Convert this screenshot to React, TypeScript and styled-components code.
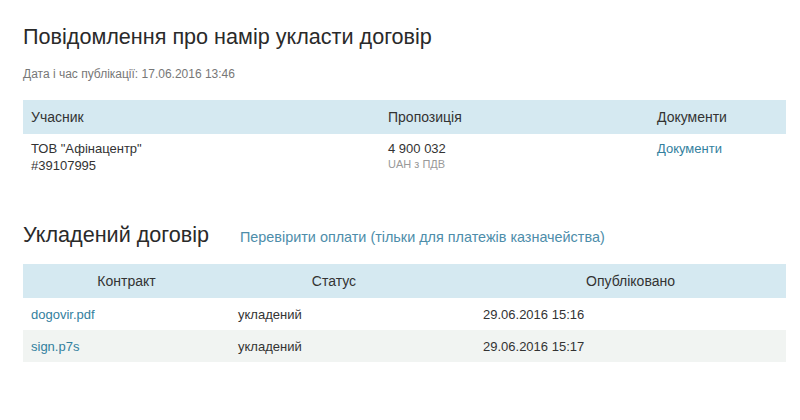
import styled, { createGlobalStyle } from "styled-components";

const GlobalStyle = createGlobalStyle`
  body {
    margin: 0;
    background: #ffffff;
    font-family: "Liberation Sans", Arial, sans-serif;
    color: #333333;
  }
`;

const Page = styled.div`
  width: 763px;
  padding: 24px 0 0 23px;
`;

const Title = styled.h1`
  margin: 0;
  font-size: 21.6px;
  line-height: 26px;
  font-weight: normal;
  color: #2a2a2a;
`;

const PubDate = styled.div`
  margin-top: 16px;
  font-size: 12px;
  line-height: 16px;
  color: #777;
`;

const Table = styled.div<{ $top: number }>`
  margin-top: ${(p) => p.$top}px;
  width: 763px;
`;

const Row = styled.div<{ $cols: string; $alt?: boolean }>`
  display: grid;
  grid-template-columns: ${(p) => p.$cols};
  background: ${(p) => (p.$alt ? "#f1f4f2" : "#ffffff")};
`;

const HeadRow = styled(Row)`
  background: #d5e9f1;
  height: 34px;
  align-items: center;
`;

const HeadCell = styled.div<{ $center?: boolean; $shift?: number }>`
  padding: 0 8px 0 ${(p) => 8 + (p.$shift ?? 0)}px;
  font-size: 14px;
  color: #333;
  text-align: ${(p) => (p.$center ? "center" : "left")};
`;

const Cell = styled.div`
  padding: 6px 8px 7px;
  font-size: 13px;
  line-height: 17px;
  color: #333;
`;

const FileCell = styled.div`
  height: 32px;
  display: flex;
  align-items: center;
  padding: 0 8px;
  font-size: 13px;
  color: #333;
`;

const Sub = styled.div`
  font-size: 11px;
  line-height: 15px;
  color: #999;
`;

const Link = styled.a<{ $size?: number; $light?: boolean }>`
  color: ${(p) => (p.$light ? "#4d8daa" : "#33809e")};
  font-size: ${(p) => p.$size ?? 13}px;
  text-decoration: none;
  cursor: pointer;
`;

const SectionHead = styled.div`
  margin-top: 41px;
  display: flex;
  align-items: baseline;
  gap: 31px;
`;

const Heading = styled.h2`
  margin: 0;
  font-size: 21.6px;
  line-height: 26px;
  font-weight: normal;
  color: #2a2a2a;
`;

const files = [
  { name: "dogovir.pdf", status: "укладений", date: "29.06.2016 15:16" },
  { name: "sign.p7s", status: "укладений", date: "29.06.2016 15:17" },
];

const cols1 = "357px 269px 1fr";

export default function App() {
  return (
    <Page>
      <GlobalStyle />
      <Title>Повідомлення про намір укласти договір</Title>
      <PubDate>Дата і час публікації: 17.06.2016 13:46</PubDate>

      <Table $top={18}>
        <HeadRow $cols={cols1}>
          <HeadCell>Учасник</HeadCell>
          <HeadCell>Пропозиція</HeadCell>
          <HeadCell>Документи</HeadCell>
        </HeadRow>
        <Row $cols={cols1}>
          <Cell>
            ТОВ "Афінацентр"
            <br />
            #39107995
          </Cell>
          <Cell>
            4 900 032
            <Sub>UAH з ПДВ</Sub>
          </Cell>
          <Cell>
            <Link>Документи</Link>
          </Cell>
        </Row>
      </Table>

      <SectionHead>
        <Heading>Укладений договір</Heading>
        <Link $size={14.4} $light>
          Перевірити оплати (тільки для платежів казначейства)
        </Link>
      </SectionHead>

      <Table $top={16}>
        <HeadRow $cols="207px 208px 1fr">
          <HeadCell $center>Контракт</HeadCell>
          <HeadCell $center>Статус</HeadCell>
          <HeadCell $center $shift={37}>Опубліковано</HeadCell>
        </HeadRow>
        {files.map((f, i) => (
          <Row key={f.name} $cols="207px 245px 1fr" $alt={i % 2 === 1}>
            <FileCell>
              <Link>{f.name}</Link>
            </FileCell>
            <FileCell>{f.status}</FileCell>
            <FileCell>{f.date}</FileCell>
          </Row>
        ))}
      </Table>
    </Page>
  );
}
